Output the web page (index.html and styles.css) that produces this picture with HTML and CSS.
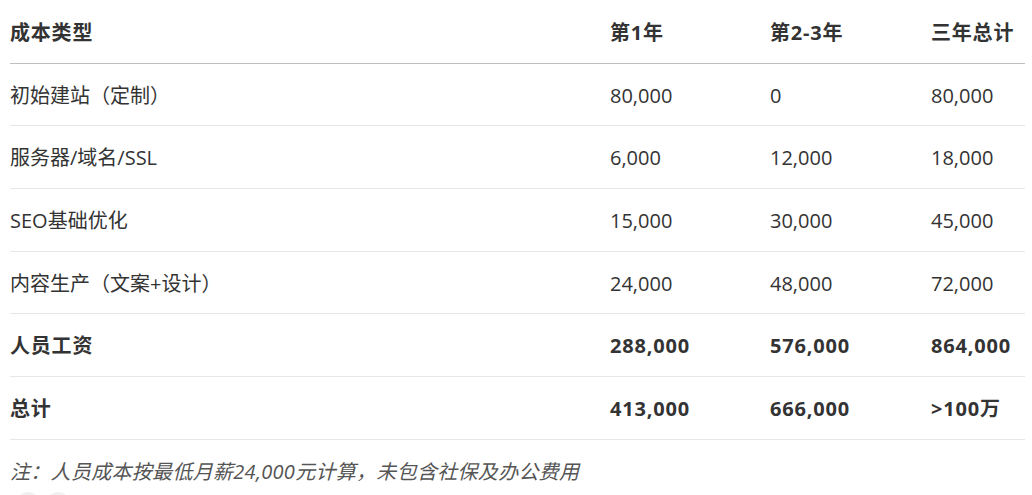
FILE: index.html
```html
<!DOCTYPE html>
<html lang="zh-CN">
<head>
<meta charset="utf-8">
<title>成本表</title>
<link rel="stylesheet" href="styles.css">
</head>
<body>
<div class="wrap">
  <table class="cost">
    <colgroup>
      <col class="c1"><col class="c2"><col class="c3"><col class="c4">
    </colgroup>
    <thead>
      <tr><th>成本类型</th><th>第1年</th><th>第2-3年</th><th>三年总计</th></tr>
    </thead>
    <tbody>
      <tr><td>初始建站（定制）</td><td>80,000</td><td>0</td><td>80,000</td></tr>
      <tr><td>服务器/域名/SSL</td><td>6,000</td><td>12,000</td><td>18,000</td></tr>
      <tr><td>SEO基础优化</td><td>15,000</td><td>30,000</td><td>45,000</td></tr>
      <tr><td>内容生产（文案+设计）</td><td>24,000</td><td>48,000</td><td>72,000</td></tr>
      <tr class="strong"><td>人员工资</td><td>288,000</td><td>576,000</td><td>864,000</td></tr>
      <tr class="strong"><td>总计</td><td>413,000</td><td>666,000</td><td>&gt;100万</td></tr>
    </tbody>
  </table>
  <p class="note">注：人员成本按最低月薪24,000元计算，未包含社保及办公费用</p>
  <div class="actions">
    <span class="dot"></span><span class="dot"></span>
  </div>
</div>
</body>
</html>
```
FILE: styles.css
```css
html, body {
  margin: 0;
  padding: 0;
  background: #ffffff;
}
body {
  font-family: "Open Sans", "Noto Sans CJK SC", sans-serif;
  font-size: 20px;
  color: #333333;
}
.wrap {
  padding: 1px 7px 0 10px;
}
.cost {
  width: 1015px;
  border-collapse: collapse;
  table-layout: fixed;
}
.c1 { width: 600px; }
.c2 { width: 160px; }
.c3 { width: 161px; }
.c4 { width: 94px; }
.cost th, .cost td {
  text-align: left;
  padding: 17px 0 15px;
  line-height: 29.67px;
  white-space: nowrap;
  vertical-align: middle;
}
.cost th {
  font-weight: 700;
  letter-spacing: 0.8px;
  border-bottom: 1px solid #bfbfbf;
}
.cost td {
  font-weight: 400;
  border-bottom: 1px solid #e6e6e6;
}
.cost tr.strong td {
  font-weight: 700;
  letter-spacing: 0.8px;
}
.note {
  margin: 17px 0 0;
  line-height: 30px;
  font-style: italic;
  letter-spacing: 0.3px;
  color: #555555;
}
.actions {
  display: flex;
  gap: 8px;
  margin: 5px 0 0 7px;
}
.dot {
  width: 22px;
  height: 22px;
  border-radius: 50%;
  background: #f0f0f0;
}
```
